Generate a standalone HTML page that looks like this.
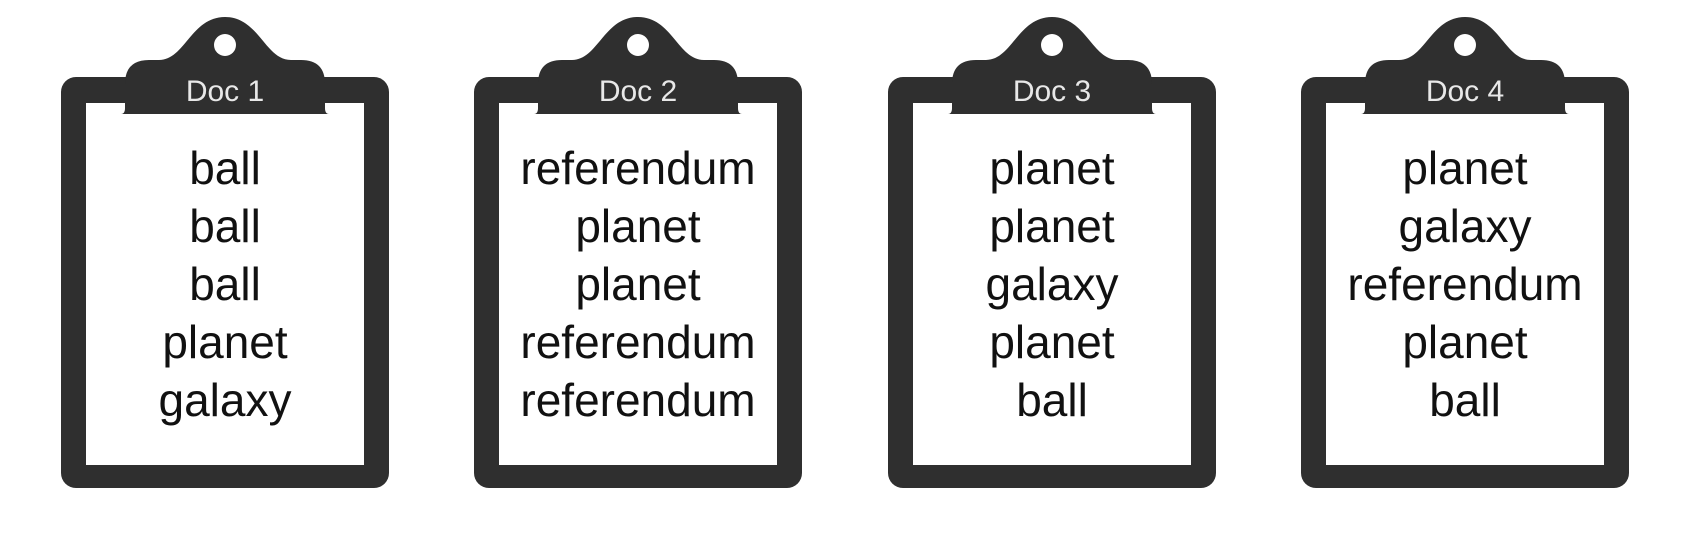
<!DOCTYPE html>
<html><head><meta charset="utf-8"><style>
html,body{margin:0;padding:0;background:#fff;width:1688px;height:548px;overflow:hidden}
svg{display:block}
.w{font-family:"Liberation Sans",Arial,sans-serif;font-size:46px;fill:#111;text-anchor:middle}
.t{font-family:"Liberation Sans",Arial,sans-serif;font-size:30px;fill:#e8e8e8;text-anchor:middle}
</style></head><body>
<svg width="1688" height="548" viewBox="0 0 1688 548" xmlns="http://www.w3.org/2000/svg">
<defs>
<g id="clip">
<rect x="-164" y="77" width="328" height="411" rx="15" fill="#2f2f2f"/>
<rect x="-139" y="103" width="278" height="362" fill="#fff"/>
<path d="M-100,114 L-100,84 Q-100,60 -76,60 L-66,60 C-40,60 -34,17 0,17 C34,17 40,60 66,60 L76,60 Q100,60 100,84 L100,108 Q100,114 104,114 L-104,114 Q-100,114 -100,108 Z" fill="#2f2f2f"/>
<circle cx="0" cy="45" r="11" fill="#fff"/>
</g>
</defs>
<g transform="translate(225,0)"><use href="#clip"/><text class="t" x="0" y="101">Doc 1</text>
<text class="w" x="0" y="184">ball</text><text class="w" x="0" y="242">ball</text><text class="w" x="0" y="300">ball</text><text class="w" x="0" y="358">planet</text><text class="w" x="0" y="416">galaxy</text></g>
<g transform="translate(638,0)"><use href="#clip"/><text class="t" x="0" y="101">Doc 2</text>
<text class="w" x="0" y="184">referendum</text><text class="w" x="0" y="242">planet</text><text class="w" x="0" y="300">planet</text><text class="w" x="0" y="358">referendum</text><text class="w" x="0" y="416">referendum</text></g>
<g transform="translate(1052,0)"><use href="#clip"/><text class="t" x="0" y="101">Doc 3</text>
<text class="w" x="0" y="184">planet</text><text class="w" x="0" y="242">planet</text><text class="w" x="0" y="300">galaxy</text><text class="w" x="0" y="358">planet</text><text class="w" x="0" y="416">ball</text></g>
<g transform="translate(1465,0)"><use href="#clip"/><text class="t" x="0" y="101">Doc 4</text>
<text class="w" x="0" y="184">planet</text><text class="w" x="0" y="242">galaxy</text><text class="w" x="0" y="300">referendum</text><text class="w" x="0" y="358">planet</text><text class="w" x="0" y="416">ball</text></g>
</svg>
</body></html>
